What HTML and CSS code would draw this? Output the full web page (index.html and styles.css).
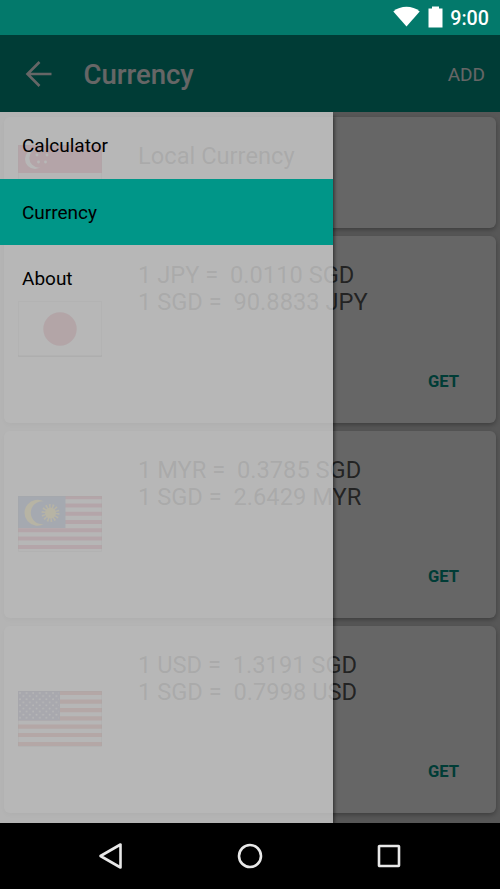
FILE: index.html
```html
<!DOCTYPE html>
<html lang="en">
<head>
<meta charset="utf-8">
<title>Currency</title>
<link rel="stylesheet" href="styles.css">
</head>
<body>
<div class="statusbar">
  <svg class="wifi" width="27" height="21" viewBox="0 0 27 21"><path d="M.3 5.4C7.500-.8 19.500-.8 26.700 5.400L13.500 20.600z" fill="#fff"/></svg>
  <svg class="battery" width="15" height="22" viewBox="0 0 15 22"><path d="M1 2.500H4V.5H11V2.500H14.500V21.500H.5V2.500z" fill="#fff"/></svg>
  <span class="clock">9:00</span>
</div>
<div class="app">
  <header class="toolbar">
    <svg class="back" width="28" height="28" viewBox="0 0 28 28"><path d="M14.500 2L2.500 14L14.500 26M2.500 14H26.500" fill="none" stroke="#fff" stroke-width="2.600"/></svg>
    <h1 class="title">Currency</h1>
    <span class="add">ADD</span>
  </header>
  <main class="cards">
    <section class="card local">
      <svg class="flag" width="84" height="56" viewBox="0 0 84 56"><path fill="#f4f4f4" d="M0 0h84v56H0z"/><path fill="#d8183f" d="M0 0h84v28H0z"/><circle cx="17" cy="14" r="10" fill="#fff"/><circle cx="21" cy="13" r="9.700" fill="#d8183f"/><g fill="#fff"><circle cx="24" cy="5.500" r="1.400"/><circle cx="19" cy="10" r="1.400"/><circle cx="29" cy="10" r="1.400"/><circle cx="20.500" cy="17" r="1.400"/><circle cx="27.500" cy="17" r="1.400"/></g><path d="M.5.5h83v55H.5z" fill="none" stroke="#000" stroke-opacity=".2"/></svg>
      <p class="rates">Local Currency</p>
    </section>
    <section class="card">
      <svg class="flag" width="84" height="56" viewBox="0 0 84 56"><path fill="#f7f7f7" d="M0 0h84v56H0z"/><circle cx="42" cy="28" r="16.700" fill="#c51f3c"/><path d="M.5.5h83v55H.5z" fill="none" stroke="#000" stroke-opacity=".2"/><path d="M0 55h84" stroke="#000" stroke-opacity=".25" stroke-width="2"/></svg>
      <p class="rates">1 JPY =&nbsp; 0.0110 SGD<br>1 SGD =&nbsp; 90.8833 JPY</p>
      <span class="get">GET</span>
    </section>
    <section class="card">
      <svg class="flag" width="84" height="56" viewBox="0 0 84 56"><path fill="#f4f4f4" d="M0 0h84v56H0z"/><path d="M0 1.200h84M0 9.500h84M0 17.700h84M0 25.900h84M0 34.200h84M0 42.500h84M0 51h84" stroke="#d9204c" stroke-width="4"/><path fill="#2050a8" d="M0 0h47.500v32H0z"/><path d="M26 5.500A13 13 0 1 0 26 28A11.400 11.400 0 1 1 26 5.500z" fill="#fbd116"/><circle cx="32.500" cy="17" r="5.500" fill="#fbd116"/><circle cx="32.500" cy="17" r="7" fill="none" stroke="#fbd116" stroke-width="4" stroke-dasharray="1.500 1.640"/><path d="M.5.5h83v55H.5z" fill="none" stroke="#000" stroke-opacity=".2"/></svg>
      <p class="rates">1 MYR =&nbsp; 0.3785 SGD<br>1 SGD =&nbsp; 2.6429 MYR</p>
      <span class="get">GET</span>
    </section>
    <section class="card">
      <svg class="flag" width="84" height="56" viewBox="0 0 84 56"><defs><pattern id="stars" width="6.600" height="6.200" patternUnits="userSpaceOnUse"><circle cx="2" cy="2" r=".95" fill="#fff"/><circle cx="5.300" cy="5.100" r=".95" fill="#fff"/></pattern></defs><path fill="#f4f4f4" d="M0 0h84v56H0z"/><path d="M0 2h84M0 10.700h84M0 19.200h84M0 27.400h84M0 35.700h84M0 44h84M0 53h84" stroke="#d3352e" stroke-width="4.200"/><path fill="#43448c" d="M0 0h42v29.500H0z"/><path fill="url(#stars)" d="M1 1h40v27H1z"/><path d="M.5.5h83v55H.5z" fill="none" stroke="#000" stroke-opacity=".2"/></svg>
      <p class="rates">1 USD =&nbsp; 1.3191 SGD<br>1 SGD =&nbsp; 0.7998 USD</p>
      <span class="get">GET</span>
    </section>
  </main>
  <div class="scrim"></div>
  <nav class="drawer">
    <a class="item">Calculator</a>
    <a class="item selected">Currency</a>
    <a class="item">About</a>
  </nav>
</div>
<footer class="navbar">
  <svg width="28" height="28" viewBox="0 0 28 28"><path d="M3.500 14L23.500 2.500V25.500z"/></svg>
  <svg width="28" height="28" viewBox="0 0 28 28"><circle cx="14" cy="14" r="11"/></svg>
  <svg width="28" height="28" viewBox="0 0 28 28"><rect x="4" y="4" width="20" height="20" rx=".5"/></svg>
</footer>
</body>
</html>
```
FILE: styles.css
```css
* { box-sizing: border-box; }
body {
  margin: 0;
  width: 500px;
  height: 889px;
  overflow: hidden;
  display: flex;
  flex-direction: column;
  font-family: Roboto, sans-serif;
}
.statusbar {
  height: 35px;
  flex: none;
  background: #03796b;
  color: #fff;
  display: flex;
  align-items: center;
  justify-content: flex-end;
  padding-right: 11px;
}
.wifi { margin: -2px 8px 0 0; }
.battery { margin: -1px 7.500px 0 0; }
.clock { font-size: 19.700px; font-weight: 500; line-height: 35px; padding-top: 1px; }
.app {
  position: relative;
  height: 788px;
  flex: none;
  overflow: hidden;
  background: #dadada;
}
.toolbar {
  height: 77px;
  background: #009688;
  color: #fff;
  display: flex;
  align-items: center;
  padding: 0 15px 0 25px;
}
.title { margin: 3px 0 0 30.500px; font-size: 27.500px; font-weight: 500; line-height: 34px; }
.add { margin: 2px 0 0 auto; font-size: 19px; line-height: 24px; }
.cards { display: flex; flex-direction: column; gap: 8px; padding: 5px 4px 10px; }
.card {
  height: 187px;
  border-radius: 6px;
  background: #fff;
  box-shadow: 0 2px 5px rgba(0, 0, 0, .3);
  display: grid;
  grid-template-columns: 120px 1fr;
  grid-template-rows: 1fr 50px;
  padding: 25px 37px 16px 14px;
}
.local { height: 111px; grid-template-rows: 1fr; }
.flag { display: block; margin-top: 40px; grid-row: 1 / 3; }
.local .flag { margin-top: 3px; grid-row: 1; }
.rates {
  margin: 1px 0 0;
  font-size: 23.680px;
  line-height: 27.400px;
  color: rgba(0, 0, 0, .67);
  white-space: nowrap;
}
.get {
  grid-column: 2;
  justify-self: end;
  align-self: center;
  color: #009688;
  font-size: 16.600px;
  font-weight: 700;
  line-height: 20px;
}
.scrim { position: absolute; inset: 0; background: rgba(0, 0, 0, .6); }
.drawer {
  position: absolute;
  top: 77px;
  left: 0;
  bottom: 0;
  width: 333px;
  background: rgba(204, 204, 204, .8);
  box-shadow: 2px 3px 4px -1px rgba(0, 0, 0, .6);
}
.item {
  display: block;
  height: 66px;
  padding: 1px 22px 0;
  font-size: 19px;
  line-height: 66px;
  color: #000;
}
.item:first-child { height: 67px; }
.selected { background: #009688; }
.navbar {
  height: 66px;
  flex: none;
  background: #000;
  display: flex;
  align-items: center;
  justify-content: center;
  gap: 111px;
}
.navbar svg { fill: none; stroke: #e8e8e8; stroke-width: 2.600; stroke-linejoin: round; }
```
